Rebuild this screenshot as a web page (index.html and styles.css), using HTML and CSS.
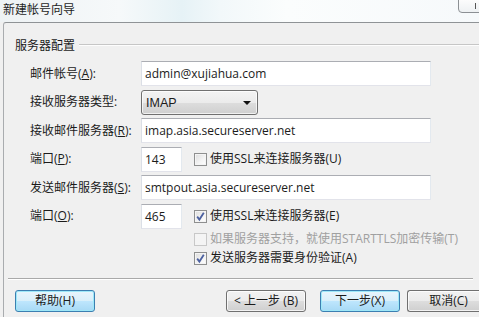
FILE: index.html
```html
<!DOCTYPE html>
<html lang="zh-CN">
<head>
<meta charset="utf-8">
<title>新建帐号向导</title>
<link rel="stylesheet" href="styles.css">
</head>
<body>
<div class="titlebar">
  <span class="title">新建帐号向导</span>
  <div class="winbtn"><span class="glyph"></span></div>
</div>
<div class="window">
  <div class="group">
    <div class="legend"><span class="legend-text">服务器配置</span><div class="legend-line"></div></div>
    <div class="form">
      <label class="lbl">邮件帐号(<u>A</u>):</label>
      <div class="input wide">admin@xujiahua.com</div>

      <label class="lbl">接收服务器类型:</label>
      <div class="select"><span class="sel-text">IMAP</span><span class="arrow"></span></div>

      <label class="lbl">接收邮件服务器(<u>R</u>):</label>
      <div class="input wide">imap.asia.secureserver.net</div>

      <label class="lbl">端口(<u>P</u>):</label>
      <div class="port-row">
        <div class="input port">143</div>
        <span class="check"><span class="box"></span>使用SSL来连接服务器(U)</span>
      </div>

      <label class="lbl">发送邮件服务器(<u>S</u>):</label>
      <div class="input wide">smtpout.asia.secureserver.net</div>

      <label class="lbl">端口(<u>O</u>):</label>
      <div class="port-row">
        <div class="input port">465</div>
        <span class="check"><span class="box checked"><svg viewBox="0 0 13 13" width="13" height="13"><path d="M3.2 6.6 L5.4 9.6 L9.8 2.8" fill="none" stroke="#4c61a0" stroke-width="1.8"/></svg></span>使用SSL来连接服务器(E)</span>
      </div>
    </div>
    <div class="extra">
      <span class="check disabled"><span class="box"></span>如果服务器支持，就使用STARTTLS加密传输(T)</span>
      <span class="check"><span class="box checked"><svg viewBox="0 0 13 13" width="13" height="13"><path d="M3.2 6.6 L5.4 9.6 L9.8 2.8" fill="none" stroke="#4c61a0" stroke-width="1.8"/></svg></span>发送服务器需要身份验证(A)</span>
    </div>
  </div>
  <div class="sep"></div>
  <div class="buttons">
    <button class="btn default">帮助(H)</button>
    <div class="spacer"></div>
    <button class="btn">&lt; 上一步 (B)</button>
    <button class="btn default next">下一步(X)</button>
    <button class="btn cancel">取消(C)</button>
  </div>
</div>
</body>
</html>
```
FILE: styles.css
```css
html, body {
  margin: 0;
  padding: 0;
}
body {
  width: 479px;
  height: 317px;
  overflow: hidden;
  font-family: "Open Sans", "Noto Sans CJK SC", sans-serif;
  font-size: 12px;
  color: #1b1b1b;
  background: #f0f0f0;
}
.titlebar {
  position: relative;
  height: 22px;
  overflow: hidden;
  background: linear-gradient(90deg, #eef2f4 0%, #f6f9fa 25%, #e6f2f6 38%, #f2f8fa 46%, #fbfdfd 60%, #f6f9fb 100%);
  display: flex;
  align-items: center;
  padding-left: 3px;
}
.title {
  font-family: "Noto Sans CJK SC", sans-serif;
  font-size: 12px;
  line-height: 16px;
  color: #1e1e1e;
  margin-top: -4px;
}
.winbtn {
  position: absolute;
  right: -1px;
  top: -2px;
  width: 20px;
  height: 13px;
  border: 1px solid #8c9094;
  border-radius: 0 0 0 4px;
  background: linear-gradient(#fdfdfd, #eef1f3);
}
.winbtn .glyph {
  position: absolute;
  left: 16px;
  top: 4px;
  width: 3px;
  height: 6px;
  border-left: 1px solid #555;
}
.window {
  border-top: 1px solid #8f9396;
  border-left: 1px solid #a9acaf;
  margin-left: 3px;
  height: 294px;
  background: #f0f0f0;
  border-radius: 3px 0 0 0;
  overflow: hidden;
}
.group {
  padding-top: 14px;
}
.legend {
  display: flex;
  align-items: center;
  height: 16px;
  padding-left: 11px;
}
.legend-text {
  font-family: "Noto Sans CJK SC", sans-serif;
  line-height: 16px;
  margin-right: 4px;
}
.legend-line {
  flex: 1;
  height: 0;
  border-top: 1px solid #c6c6c6;
  border-bottom: 1px solid #fdfdfd;
}
.form {
  margin-top: 8px;
  padding-left: 26px;
  display: grid;
  grid-template-columns: 111px auto;
  grid-auto-rows: 25px;
  row-gap: 3.6px;
  align-items: center;
}
.lbl {
  line-height: 16px;
  white-space: nowrap;
}
.lbl u {
  text-decoration-thickness: 1px;
  text-underline-offset: 1px;
}
.input {
  box-sizing: border-box;
  height: 25px;
  background: #fff;
  border: 1px solid #e2e3ea;
  border-top-color: #abadb3;
  border-left-color: #dbdfe6;
  border-right-color: #e3e9ef;
  padding: 0 3px;
  line-height: 23px;
  font-size: 12px;
  white-space: nowrap;
}
.input.wide {
  width: 290px;
}
.input.port {
  width: 41px;
}
.select {
  box-sizing: border-box;
  position: relative;
  width: 117px;
  height: 25px;
  border: 1px solid #707070;
  border-radius: 3px;
  background: linear-gradient(#f3f3f3 0%, #ebebeb 50%, #dddddd 51%, #cfcfcf 100%);
  box-shadow: inset 0 0 0 1px rgba(255,255,255,0.7);
  padding-left: 4px;
  line-height: 23px;
}
.sel-text {
  font-family: "Liberation Sans", sans-serif;
  font-size: 12.5px;
  color: #1b1b1b;
}
.arrow {
  position: absolute;
  right: 6px;
  top: 10px;
  width: 0;
  height: 0;
  border-left: 4px solid transparent;
  border-right: 4px solid transparent;
  border-top: 4px solid #111;
}
.port-row {
  display: flex;
  align-items: center;
  height: 25px;
}
.check {
  display: inline-flex;
  align-items: center;
  line-height: 16px;
  white-space: nowrap;
}
.port-row .check {
  margin-left: 12px;
}
.box {
  box-sizing: border-box;
  width: 13px;
  height: 13px;
  border: 1px solid #8e8f8f;
  background: linear-gradient(135deg, #dcdcdc 0%, #f4f4f4 60%, #ffffff 100%);
  box-shadow: inset 0 0 0 1px #f4f4f4;
  margin-right: 3px;
  position: relative;
  flex: none;
}
.box svg {
  position: absolute;
  left: -1px;
  top: -1px;
}
.check.disabled {
  color: #a0a0a0;
}
.check.disabled .box {
  border-color: #c8c8c8;
  background: #f4f4f4;
  box-shadow: none;
}
.extra {
  display: flex;
  flex-direction: column;
  padding-left: 190px;
  margin-top: 1px;
}
.extra .check {
  height: 19px;
}
.sep {
  margin: 10px 6px 0 4px;
  border-top: 1px solid #a9a9a9;
  border-bottom: 1px solid #ffffff;
  height: 0;
}
.buttons {
  display: flex;
  margin-top: 10px;
  padding-left: 11px;
  overflow: hidden;
}
.spacer {
  width: 131px;
  flex: none;
}
.btn {
  box-sizing: border-box;
  width: 80px;
  height: 22px;
  margin: 0;
  padding: 0;
  border: 1px solid #707070;
  border-radius: 3px;
  background: linear-gradient(#f2f2f2 0%, #ebebeb 50%, #dddddd 51%, #cfcfcf 100%);
  box-shadow: inset 0 0 0 1px rgba(255,255,255,0.75);
  font-family: "Open Sans", "Noto Sans CJK SC", sans-serif;
  font-size: 12px;
  color: #1b1b1b;
  line-height: 20px;
  flex: none;
}
.btn.default {
  border-color: #3c7fb1;
  background: linear-gradient(#e8f5fc 0%, #d9effa 50%, #bee6fd 51%, #a7d9f5 100%);
  box-shadow: inset 0 0 0 1px #9ee8f8;
}
.btn.next {
  margin-left: 14px;
}
.btn.cancel {
  margin-left: 7px;
  width: 73px;
  border-right: none;
  border-radius: 3px 0 0 3px;
  padding-left: 9px;
}
```
